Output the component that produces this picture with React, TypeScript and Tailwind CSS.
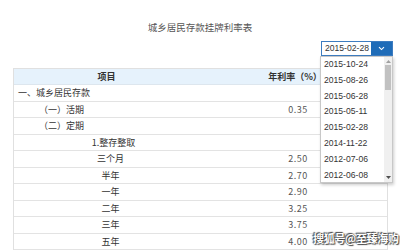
import React from "react";

const rows: { label: string; align: "left" | "indent" | "center"; rate: string }[] = [
  { label: "一、城乡居民存款", align: "left", rate: "" },
  { label: "（一）活期", align: "indent", rate: "0.35" },
  { label: "（二）定期", align: "indent", rate: "" },
  { label: "1.整存整取", align: "center", rate: "" },
  { label: "三个月", align: "center", rate: "2.50" },
  { label: "半年", align: "center", rate: "2.70" },
  { label: "一年", align: "center", rate: "2.90" },
  { label: "二年", align: "center", rate: "3.25" },
  { label: "三年", align: "center", rate: "3.75" },
  { label: "五年", align: "center", rate: "4.00" },
];

const dates = [
  "2015-10-24",
  "2015-08-26",
  "2015-06-28",
  "2015-05-11",
  "2015-02-28",
  "2014-11-22",
  "2012-07-06",
  "2012-06-08",
];

const dateFont = { fontFamily: '"Liberation Sans", "Noto Sans", sans-serif' };

export default function App() {
  return (
    <div
      className="relative w-[400px] h-[250px] overflow-hidden bg-white text-[#333]"
      style={{ fontFamily: '"Noto Sans CJK SC", "Noto Sans", sans-serif' }}
    >
      <div className="pt-[20px] h-[41px] text-center text-[9.5px] leading-[14px] text-[#555]">
        城乡居民存款挂牌利率表
      </div>
      <div className="flex justify-end pr-[7px] h-[27px]">
        <div className="flex h-[15px] w-[72px] border border-[#3d7cc0] bg-white">
          <div
            className="flex-1 pl-[3px] text-[8.6px] leading-[13px] text-[#333] whitespace-nowrap overflow-hidden"
            style={dateFont}
          >
            2015-02-28
          </div>
          <div className="w-[21px] bg-[#1f6cb8] flex items-center justify-center">
            <svg width="7" height="5" viewBox="0 0 7 5">
              <path d="M1 1.2 L3.5 3.6 L6 1.2" stroke="#fff" strokeWidth="1.1" fill="none" />
            </svg>
          </div>
        </div>
      </div>
      <div className="ml-[13px] w-[375px] border-l border-r border-t border-[#e0e0e0] text-[9px]">
        <div className="flex h-[16px] bg-[#e6f2fc] border-b border-[#dde6ee] font-bold text-[#333] leading-[15px]">
          <div className="w-[185px] text-center">项目</div>
          <div className="flex-1 text-center pl-[4px]">年利率（%）</div>
        </div>
        {rows.map((r, i) => (
          <div
            key={i}
            className="flex h-[16.5px] border-b border-[#e3e3e3] leading-[15.5px] text-[#333]"
          >
            <div
              className={
                r.align === "left"
                  ? "w-[185px] pl-[4px]"
                  : r.align === "indent"
                  ? "w-[185px] pl-[25px]"
                  : i === 3
                  ? "w-[185px] text-center pl-[14px]"
                  : "w-[185px] text-center pl-[8px]"
              }
            >
              {r.label}
            </div>
            <div className="flex-1 text-center pl-[10px] text-[#555] tracking-[0.5px]">{r.rate}</div>
          </div>
        ))}
      </div>

      {/* dropdown list */}
      <div className="absolute left-[320px] top-[56px] w-[73px] h-[127px] bg-white border border-[#c8c8c8] shadow-[1px_2px_3px_rgba(0,0,0,0.2)] flex overflow-hidden">
        <div className="flex-1">
          {dates.map((d) => (
            <div
              key={d}
              className="h-[15.8px] pl-[3px] text-[8.6px] leading-[15.8px] text-[#333] whitespace-nowrap"
              style={dateFont}
            >
              {d}
            </div>
          ))}
        </div>
        <div className="w-[8px] bg-[#f0f0f0] flex flex-col items-center">
          <div className="h-[8px] flex items-center justify-center">
            <svg width="5" height="3" viewBox="0 0 5 3">
              <path d="M0 3 L2.5 0 L5 3 Z" fill="#a0a0a0" />
            </svg>
          </div>
          <div className="w-[6px] h-[25px] bg-[#c1c1c1]" />
          <div className="flex-1" />
          <div className="h-[9px] flex items-center justify-center">
            <svg width="5" height="3" viewBox="0 0 5 3">
              <path d="M0 0 L2.5 3 L5 0 Z" fill="#505050" />
            </svg>
          </div>
        </div>
      </div>

      {/* watermark */}
      <div
        className="absolute left-[313px] top-[230px] text-[11px] leading-[16px] text-white font-bold tracking-[-0.3px]"
        style={{ textShadow: "0 0 1px #333, 1px 1px 1px #444, -1px -1px 1px #444" }}
      >
        搜狐号@至臻海购
      </div>
    </div>
  );
}
